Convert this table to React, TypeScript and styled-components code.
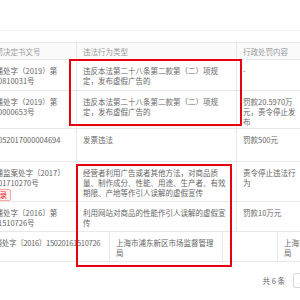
import React from 'react';
import styled, { createGlobalStyle } from 'styled-components';

const GlobalStyle = createGlobalStyle`
  html, body {
    margin: 0;
    padding: 0;
    background: #fff;
    overflow: hidden;
  }
  body {
    font-family: 'Noto Sans CJK SC', 'Noto Sans', sans-serif;
  }
`;

const Page = styled.div`
  position: relative;
  width: 420px;
  height: 300px;
  background: #fff;
`;

const TopBar = styled.div`
  height: 30px;
  border-bottom: 1px solid #edf0f4;
  margin-bottom: 11px;
`;

const TableViewport = styled.div`
  overflow: hidden;
`;

// the table is scrolled sideways, so its first column is partly hidden
const Table = styled.div`
  margin-left: -33px;
`;

const GridRow = styled.div<{ $cols: string; $h: number; $head?: boolean }>`
  display: grid;
  grid-template-columns: ${p => p.$cols};
  height: ${p => p.$h}px;
  box-sizing: border-box;
  border-top: ${p => (p.$head ? '1px solid #e8e8e8' : 'none')};
  border-bottom: 1px solid #e8e8e8;
  background: ${p => (p.$head ? '#fafafa' : '#fff')};
`;

const Cell = styled.div<{ $head?: boolean }>`
  box-sizing: border-box;
  padding: ${p => (p.$head ? '4px 6px 0' : '6px 6px 0')};
  border-right: 1px solid #e8e8e8;
  font-size: 7.5px;
  line-height: 10px;
  color: ${p => (p.$head ? '#9a9a9a' : '#666')};
  overflow: hidden;
`;

const Line = styled.div<{ $tight?: boolean }>`
  white-space: nowrap;
  letter-spacing: ${p => (p.$tight ? '-0.3px' : '0')};
`;

const Tag = styled.span`
  display: inline-block;
  margin-top: 1px;
  padding: 0 3px;
  border: 1px solid #ffa39e;
  border-radius: 2px;
  background: #fff1f0;
  color: #f5222d;
  font-size: 7.5px;
  line-height: 10px;
  white-space: nowrap;
`;

const Annotation = styled.div<{ $x: number; $y: number; $w: number; $h: number }>`
  position: absolute;
  left: ${p => p.$x}px;
  top: ${p => p.$y}px;
  width: ${p => p.$w}px;
  height: ${p => p.$h}px;
  box-sizing: border-box;
  border: 2px solid #e60012;
  pointer-events: none;
`;

const Pagination = styled.div`
  display: flex;
  align-items: center;
  justify-content: flex-end;
  gap: 8px;
  height: 16px;
  margin-top: 10px;
  padding-right: 6px;
  font-size: 7.5px;
  color: #666;
`;

const Total = styled.span`
  white-space: nowrap;
`;

const SizeSelect = styled.div`
  display: flex;
  align-items: center;
  box-sizing: border-box;
  width: 60px;
  height: 15px;
  padding: 0 5px;
  border: 1px solid #d9d9d9;
  border-radius: 2px;
  white-space: nowrap;
`;

const Pager = styled.div`
  display: flex;
  gap: 4px;
`;

const PageButton = styled.div`
  display: flex;
  align-items: center;
  justify-content: center;
  box-sizing: border-box;
  width: 15px;
  height: 15px;
  border: 1px solid #d9d9d9;
  border-radius: 2px;
`;

const COLS = '110px 160px 66px 1fr';
const LAST_COLS = '143px 113px 55px 113px 1fr';

const AD_RULE = '违反本法第二十八条第二款第（二）项规定，发布虚假广告的';
const BUREAU = '上海市浦东新区市场监督管理局';

interface Record {
  h: number;
  no: string[];
  tag?: string;
  type: string;
  content: string;
}

const records: Record[] = [
  {
    h: 31,
    no: ['沪市监浦处字（2019）第', '1520190810031号'],
    type: AD_RULE,
    content: '-',
  },
  {
    h: 38,
    no: ['沪市监浦处字（2019）第', '1520190000653号'],
    type: AD_RULE,
    content: '罚款20.5970万元，责令停止发布',
  },
  {
    h: 33,
    no: ['310115052017000004694'],
    type: '发票违法',
    content: '罚款500元',
  },
  {
    h: 40,
    no: ['上海市浦监案处字〔2017〕', '15201701710270号'],
    tag: '失信记录',
    type: '经营者利用广告或者其他方法，对商品质量、制作成分、性能、用途、生产者、有效期限、产地等作引人误解的虚假宣传',
    content: '责令停止违法行为',
  },
  {
    h: 30,
    no: ['沪市监浦处字〔2016〕第', '1520161510726号'],
    type: '利用网站对商品的性能作引人误解的虚假宣传',
    content: '罚款10万元',
  },
];

const App: React.FC = () => {
  return (
    <Page>
      <GlobalStyle />
      <TopBar />
      <TableViewport>
        <Table>
          <GridRow $cols={COLS} $h={18} $head>
            <Cell $head>
              <Line>行政处罚决定书文号</Line>
            </Cell>
            <Cell $head>违法行为类型</Cell>
            <Cell $head>行政处罚内容</Cell>
            <Cell $head />
          </GridRow>
          {records.map((r, i) => (
            <GridRow key={i} $cols={COLS} $h={r.h}>
              <Cell>
                {r.no.map(l => (
                  <Line key={l}>{l}</Line>
                ))}
                {r.tag && <Tag>{r.tag}</Tag>}
              </Cell>
              <Cell>{r.type}</Cell>
              <Cell>{r.content}</Cell>
              <Cell />
            </GridRow>
          ))}
          <GridRow $cols={LAST_COLS} $h={30}>
            <Cell>
              <Line $tight>沪市监浦处字〔2016〕15020161510726</Line>
            </Cell>
            <Cell>{BUREAU}</Cell>
            <Cell>-</Cell>
            <Cell>{BUREAU}</Cell>
            <Cell />
          </GridRow>
        </Table>
      </TableViewport>
      <Pagination>
        <Total>共 6 条</Total>
        <SizeSelect>10 条/页</SizeSelect>
        <Pager>
          <PageButton>‹</PageButton>
          <PageButton>1</PageButton>
          <PageButton>›</PageButton>
        </Pager>
      </Pagination>
      <Annotation $x={69} $y={59} $w={173} $h={67} />
      <Annotation $x={76} $y={164} $w={156} $h={103} />
    </Page>
  );
};

export default App;
